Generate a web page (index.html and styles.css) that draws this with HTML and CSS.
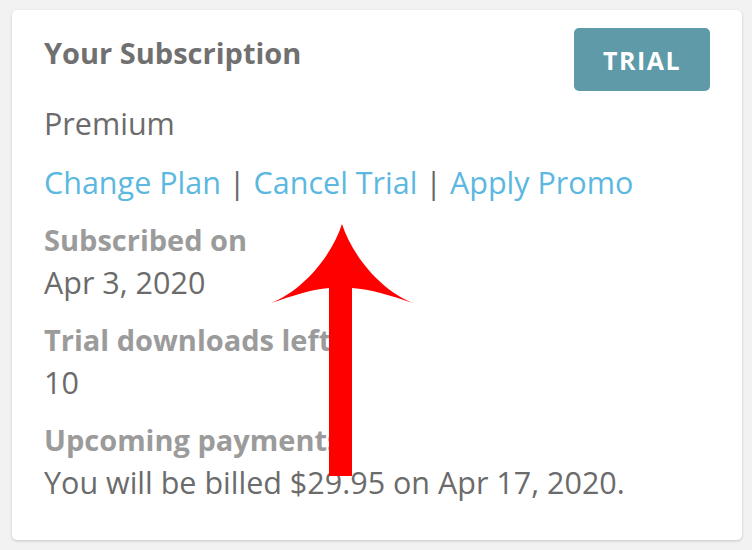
FILE: index.html
```html
<!DOCTYPE html>
<html lang="en">

<head>
    <meta charset="UTF-8">
    <meta name="viewport" content="width=device-width, initial-scale=1.0">
    <title>Subscription</title>
    <link rel="stylesheet" href="styles.css">
</head>

<body>
    <div class="card">
        <div class="header">
            <h2 class="title">Your Subscription</h2>
            <span class="badge">TRIAL</span>
        </div>
        <p class="plan">Premium</p>
        <p class="links">
            <a href="#">Change Plan</a> <span class="sep">|</span>
            <a href="#">Cancel Trial</a> <span class="sep">|</span>
            <a href="#">Apply Promo</a>
        </p>
        <div class="field">
            <div class="label">Subscribed on</div>
            <div class="value">Apr 3, 2020</div>
        </div>
        <div class="field">
            <div class="label">Trial downloads left</div>
            <div class="value">10</div>
        </div>
        <div class="field">
            <div class="label">Upcoming payments</div>
            <div class="value">You will be billed $29.95 on Apr 17, 2020.</div>
        </div>
    </div>

    <svg class="arrow" width="752" height="550" viewBox="0 0 752 550">
        <path fill="#ff0000" d="M342 224 C 352 255, 380 290, 413 303 C 392 296, 370 289, 352 288 L 352 476 L 329 476 L 329 288 C 313 289, 292 296, 271 303 C 304 290, 332 255, 342 224 Z" />
    </svg>
</body>

</html>
```

FILE: styles.css
```css
* {
    box-sizing: border-box;
}

body {
    margin: 0;
    height: 550px;
    background-color: #f2f2f2;
    font-family: "Open Sans", "Noto Sans", sans-serif;
    font-size: 30.5px;
    line-height: 42px;
    color: #6b6b6b;
    position: relative;
}

.card {
    margin: 10px 10px 0 12px;
    width: 730px;
    height: 530px;
    background: white;
    border-radius: 5px;
    box-shadow: 0 1px 3px rgba(0, 0, 0, 0.18);
    padding: 18px 32px 0 32px;
}

.header {
    display: flex;
    justify-content: space-between;
    align-items: flex-start;
}

.title {
    margin: 4px 0 0 0;
    font-size: 29px;
    font-weight: 700;
    color: #707070;
}

.badge {
    width: 136px;
    height: 63px;
    display: flex;
    align-items: center;
    justify-content: center;
    background-color: #5e9aa8;
    color: white;
    border-radius: 5px;
    font-size: 25px;
    font-weight: 700;
    letter-spacing: 1.5px;
}

.plan {
    margin: 11px 0 0 0;
}

.links {
    margin: 17px 0 0 0;
}

.links a {
    color: #5bb8e0;
    text-decoration: none;
}

.sep {
    color: #666;
}

.field {
    margin-top: 16px;
}

.label {
    font-size: 29px;
    font-weight: 700;
    color: #9b9b9b;
}

.arrow {
    position: absolute;
    left: 0;
    top: 0;
    pointer-events: none;
}
```
